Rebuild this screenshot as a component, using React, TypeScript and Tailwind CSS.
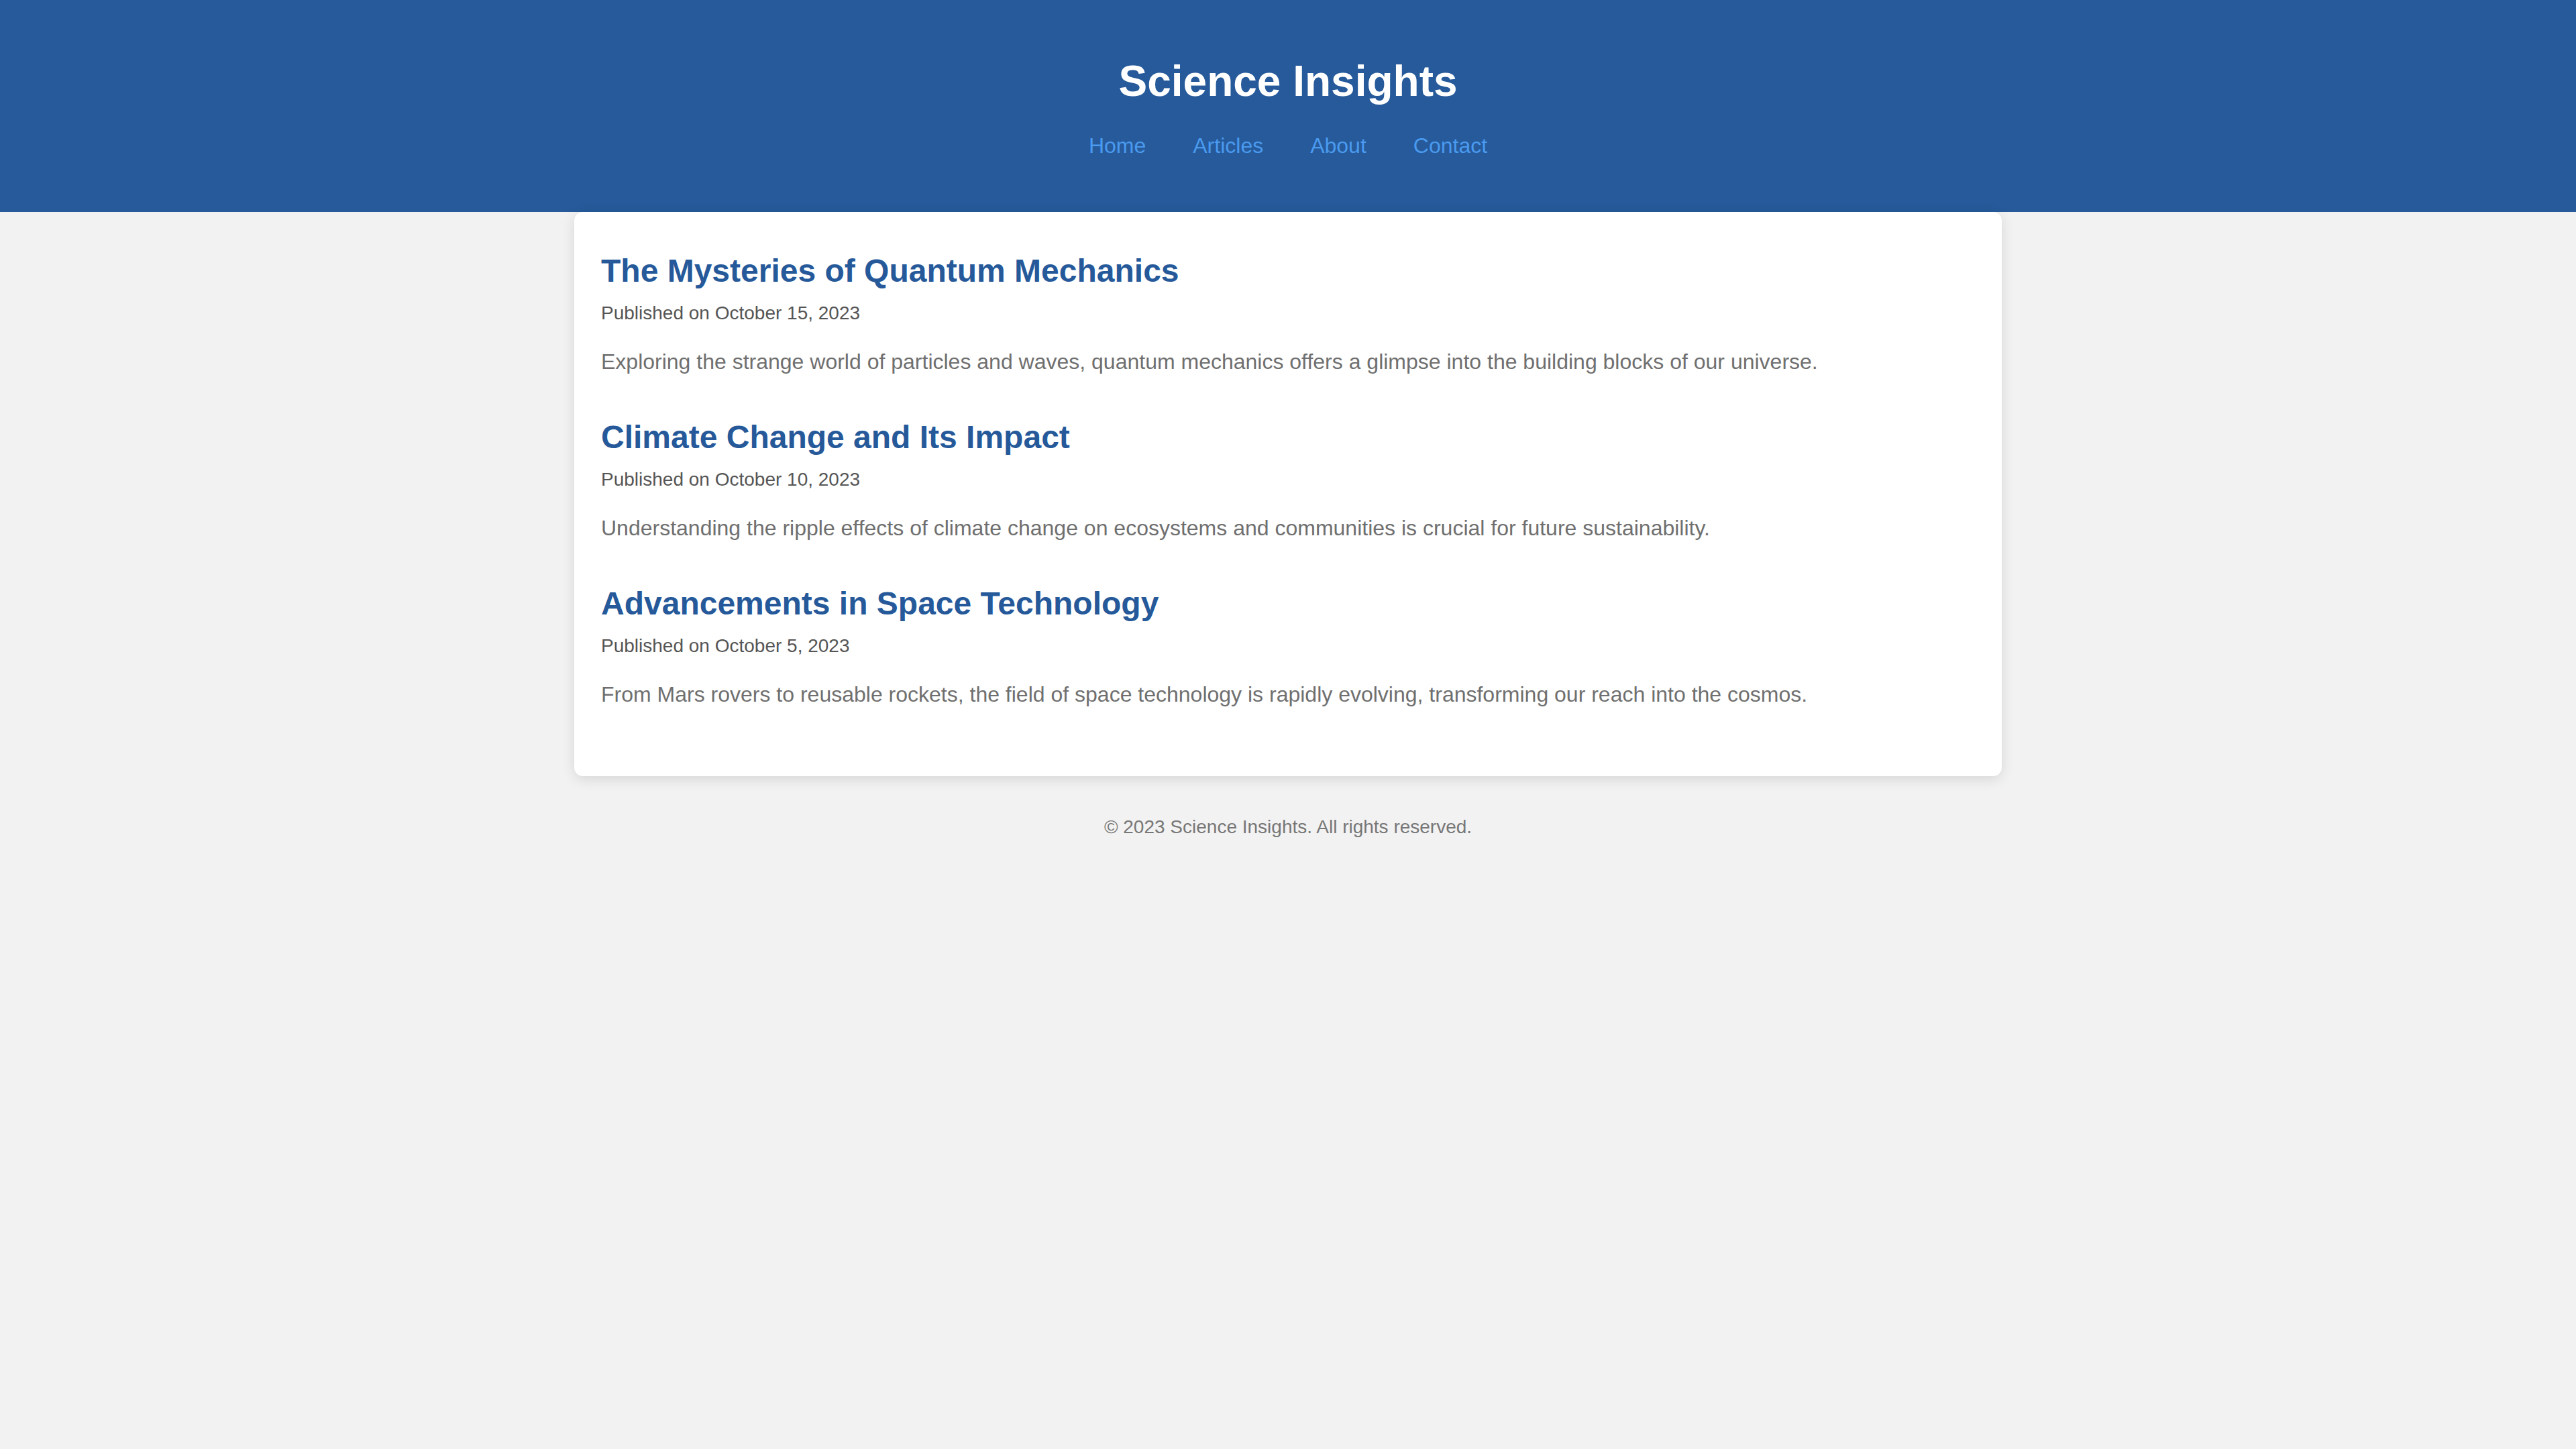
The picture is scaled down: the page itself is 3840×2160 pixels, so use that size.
const articles = [
  {
    title: "The Mysteries of Quantum Mechanics",
    date: "Published on October 15, 2023",
    body: "Exploring the strange world of particles and waves, quantum mechanics offers a glimpse into the building blocks of our universe.",
  },
  {
    title: "Climate Change and Its Impact",
    date: "Published on October 10, 2023",
    body: "Understanding the ripple effects of climate change on ecosystems and communities is crucial for future sustainability.",
  },
  {
    title: "Advancements in Space Technology",
    date: "Published on October 5, 2023",
    body: "From Mars rovers to reusable rockets, the field of space technology is rapidly evolving, transforming our reach into the cosmos.",
  },
];

const navLinks = ["Home", "Articles", "About", "Contact"];

export default function App() {
  return (
    <div className="min-h-screen bg-[#f2f2f2] font-['Liberation_Sans',Arial,sans-serif] leading-[normal]">
      <header className="bg-[#265a9a] pt-[84px] pb-[80px] text-center">
        <h1 className="text-[64px] font-bold leading-[normal] text-white">Science Insights</h1>
        <nav className="mt-[41px] flex justify-center gap-[70px]">
          {navLinks.map((link) => (
            <a key={link} href="#" className="text-[32px] leading-[normal] text-[#4a9af0]">
              {link}
            </a>
          ))}
        </nav>
      </header>

      <main className="mx-auto w-[2128px] rounded-[13px] bg-white px-[40px] pt-[60px] pb-[103px] shadow-[0_4px_20px_rgba(0,0,0,0.12)]">
        <div className="flex flex-col gap-[66px]">
          {articles.map((a) => (
            <article key={a.title}>
              <h2 className="text-[48px] font-bold leading-[normal] text-[#25599a]">{a.title}</h2>
              <p className="mt-[20px] text-[28px] leading-[normal] text-[#555555]">{a.date}</p>
              <p className="mt-[38px] text-[32px] leading-[normal] text-[#6f6f6f]">{a.body}</p>
            </article>
          ))}
        </div>
      </main>

      <footer className="mt-[60px] text-center text-[28px] leading-[normal] text-[#777777]">
        © 2023 Science Insights. All rights reserved.
      </footer>
    </div>
  );
}
